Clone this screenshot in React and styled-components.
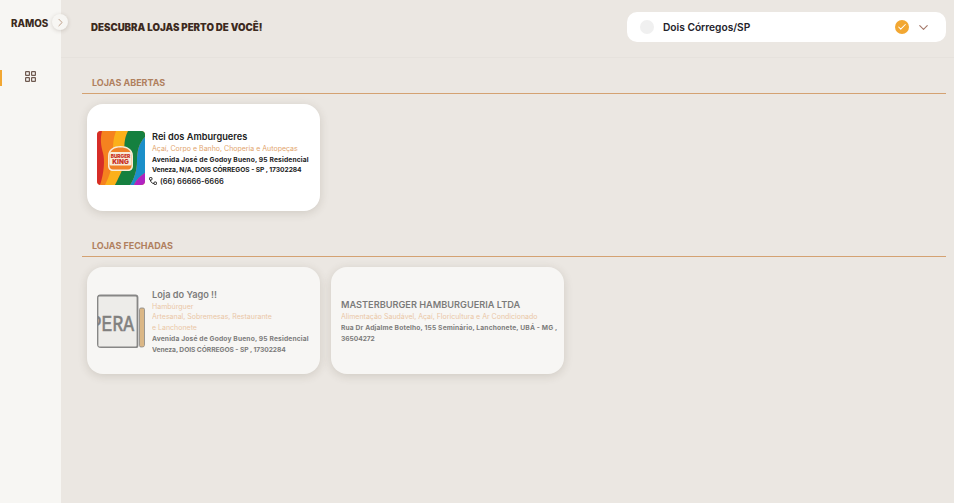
import React from "react";
import styled, { createGlobalStyle } from "styled-components";
import { ChevronDown, ChevronRight, Check } from "lucide-react";

const GlobalStyle = createGlobalStyle`
  html, body { margin: 0; padding: 0; height: 100%; }
  body { font-family: Inter, "Noto Sans", sans-serif; background: #ebe7e2; }
  #root { height: 100%; }
`;

const Page = styled.div`
  display: flex;
  width: 954px;
  height: 503px;
  overflow: hidden;
  background: #ebe7e2;
`;

const Sidebar = styled.aside`
  position: relative;
  width: 61px;
  flex-shrink: 0;
  background: #f7f6f3;
`;

const Brand = styled.div`
  padding: 17px 0 0 11px;
  height: 54px;
  box-sizing: border-box;
  font-size: 9.8px;
  line-height: 14px;
  font-weight: 800;
  color: #3c2a20;
`;

const Toggle = styled.button`
  position: absolute;
  top: 14px;
  left: 52px;
  width: 16px;
  height: 16px;
  padding: 0;
  border: 0;
  border-radius: 50%;
  background: #f7f6f3;
  box-shadow: 0 1px 4px rgba(60, 40, 20, 0.18);
  color: #b08a70;
  display: flex;
  align-items: center;
  justify-content: center;
`;

const NavItem = styled.div`
  height: 16px;
  margin-top: 16px;
  border-left: 2px solid #f2a732;
  display: flex;
  align-items: center;
  padding-left: 23px;
  color: #6f5a50;

  svg {
    margin-bottom: 4px;
  }
`;

const Main = styled.main`
  flex: 1;
  min-width: 0;
`;

const Header = styled.header`
  height: 58px;
  box-sizing: border-box;
  padding: 12px 8px 0 30px;
  display: flex;
  justify-content: space-between;
  align-items: flex-start;
  border-bottom: 1px solid #e6e2dd;
`;

const Title = styled.h1`
  margin: 9px 0 0;
  font-size: 9.7px;
  line-height: 14px;
  font-weight: 900;
  color: #3c2a20;
`;

const CitySelect = styled.div`
  width: 319px;
  height: 30px;
  box-sizing: border-box;
  padding: 0 15px 0 13px;
  display: flex;
  align-items: center;
  background: #fff;
  border-radius: 10px;
`;

const CityDot = styled.span`
  width: 14px;
  height: 14px;
  border-radius: 50%;
  background: #f0f0f0;
  margin-right: 9px;
`;

const CityName = styled.span`
  flex: 1;
  font-size: 10.2px;
  font-weight: 600;
  color: #23222a;
`;

const CheckBadge = styled.span`
  width: 14px;
  height: 14px;
  border-radius: 50%;
  background: #f2a732;
  color: #fff;
  display: flex;
  align-items: center;
  justify-content: center;
  margin-right: 7px;
`;

const Arrow = styled.span`
  display: flex;
  color: #a5796a;
`;

const Section = styled.section`
  padding: ${(p) => p.$top}px 8px 0 21px;
`;

const SectionTitle = styled.h2`
  margin: 0;
  padding: 0 0 4px 10px;
  font-size: 9px;
  line-height: 12px;
  font-weight: 700;
  color: #b0805e;
  border-bottom: 1px solid #d4a272;
`;

const CardRow = styled.div`
  display: flex;
  gap: 11px;
  padding: 10px 0 0 5px;
`;

const Card = styled.article`
  width: 233px;
  height: 107px;
  box-sizing: border-box;
  padding: 3px 10px 0;
  display: flex;
  align-items: center;
  gap: 7px;
  border-radius: 16px;
  background: ${(p) => (p.$closed ? "#f7f6f4" : "#fff")};
  box-shadow: 0 2px 10px rgba(70, 55, 40, 0.16);
`;

const Thumb = styled.div`
  width: 48px;
  height: 54px;
  margin-top: -3px;
  flex-shrink: 0;
  border-radius: 4px;
  overflow: hidden;
  opacity: ${(p) => (p.$closed ? 0.6 : 1)};

  svg {
    display: block;
  }
`;

const Info = styled.div`
  min-width: 0;
  flex: 1;
  opacity: ${(p) => (p.$closed ? 0.58 : 1)};
`;

const StoreName = styled.div`
  font-size: 9.2px;
  line-height: 12px;
  margin-bottom: 1px;
  font-weight: 600;
  color: #222;
`;

const Categories = styled.div`
  font-size: 7px;
  line-height: 10.7px;
  color: #e2a56d;
`;

const Address = styled.div`
  font-size: 6.7px;
  letter-spacing: ${(p) => (p.$caps ? "-0.01em" : "0.022em")};
  line-height: 10.7px;
  font-weight: 700;
  color: #222;
  white-space: nowrap;
`;

const PhoneLine = styled.div`
  position: relative;
  font-size: 7.5px;
  line-height: 11px;
  font-weight: 600;
  color: #222;
  padding-left: 8px;
`;

const PhoneIcon = styled.svg`
  position: absolute;
  left: -3px;
  top: 1px;
`;

const GridIcon = () => (
  <svg width="11" height="11" viewBox="0 0 11 11" fill="none" stroke="currentColor" strokeWidth="1.2">
    <rect x="0.600" y="0.600" width="3.800" height="3.800" rx="0.500" />
    <rect x="6.600" y="0.600" width="3.800" height="3.800" rx="0.500" />
    <rect x="0.600" y="6.600" width="3.800" height="3.800" rx="0.500" />
    <rect x="6.600" y="6.600" width="3.800" height="3.800" rx="0.500" />
  </svg>
);

const BurgerKingLogo = () => (
  <svg width="48" height="54" viewBox="0 0 48 54">
    <rect width="48" height="54" fill="#f5821f" />
    <path d="M0 0h5c-2 8-1 15 1 22s1 20-3 32H0z" fill="#d62d27" />
    <path d="M19 0h12c-4 8-4 15-3 24s-5 20-10 30H8c5-10 8-20 8-30S16 8 19 0z" fill="#fbb01a" />
    <path d="M31 0h17v6c-6 6-8 14-8 24s-3 18-7 24H18c5-10 11-21 10-30S27 8 31 0z" fill="#15803f" />
    <path d="M48 6v36c-5 3-9 7-11 12h-4c4-6 7-14 7-24S42 12 48 6z" fill="#1b8fc9" />
    <path d="M48 42v12H37c2-5 6-9 11-12z" fill="#b023c2" />
    <path d="M11 25c0-7 6-10 12.500-10S36 18 36 25v10c0 3-2 5-5 5H16c-3 0-5-2-5-5z" fill="#f8ecd8" />
    <path d="M12.500 25c0-6 5-8.500 11-8.500s11 2.500 11 8.500v10c0 2-1.500 3.500-3.500 3.500H16c-2 0-3.500-1.500-3.500-3.500z" fill="#f08227" />
    <rect x="12.500" y="21" width="22" height="13.500" rx="1.500" fill="#f8ecd8" />
    <text x="23.500" y="26.600" textAnchor="middle" fontFamily="Inter, sans-serif" fontWeight="900" fontSize="4.800" fill="#c8321f">BURGER</text>
    <text x="23.500" y="33.200" textAnchor="middle" fontFamily="Inter, sans-serif" fontWeight="900" fontSize="6.400" fill="#c8321f">KING</text>
  </svg>
);

const OperaMark = () => (
  <svg width="48" height="54" viewBox="0 0 48 54">
    <rect x="0.500" y="1.500" width="40" height="52" rx="2" fill="#e8e6e2" stroke="#3e3e3e" strokeWidth="1.800" />
    <rect x="42.500" y="14" width="5" height="39" rx="1.500" fill="#c98e3e" stroke="#3e3e3e" strokeWidth="0.800" />
    <svg x="1" y="2" width="39" height="51" viewBox="0 0 39 51">
      <text x="36" y="34" textAnchor="end" fontFamily="'Liberation Mono', monospace" fontSize="18" fill="#333" stroke="#333" strokeWidth="0.500" transform="translate(0 -7.500) scale(1 1.250)">PERA</text>
    </svg>
  </svg>
);

export default function App() {
  return (
    <Page>
      <GlobalStyle />
      <Sidebar>
        <Brand>RAMOS</Brand>
        <Toggle>
          <ChevronRight size={13} strokeWidth={1.5} />
        </Toggle>
        <NavItem>
          <GridIcon />
        </NavItem>
      </Sidebar>
      <Main>
        <Header>
          <Title>DESCUBRA LOJAS PERTO DE VOCÊ!</Title>
          <CitySelect>
            <CityDot />
            <CityName>Dois Córregos/SP</CityName>
            <CheckBadge>
              <Check size={10} strokeWidth={2.5} />
            </CheckBadge>
            <Arrow>
              <ChevronDown size={15} strokeWidth={1.8} />
            </Arrow>
          </CitySelect>
        </Header>

        <Section $top={19}>
          <SectionTitle>LOJAS ABERTAS</SectionTitle>
          <CardRow>
            <Card>
              <Thumb>
                <BurgerKingLogo />
              </Thumb>
              <Info>
                <StoreName>Rei dos Amburgueres</StoreName>
                <Categories>Açaí, Corpo e Banho, Choperia e Autopeças</Categories>
                <Address>Avenida José de Godoy Bueno, 95 Residencial</Address>
                <Address $caps>Veneza, N/A, DOIS CÓRREGOS - SP , 17302284</Address>
                <PhoneLine>
                  <PhoneIcon width="8" height="8" viewBox="0 0 8 8" fill="none" stroke="#222" strokeWidth="1">
                    <rect x="0.500" y="0.500" width="2.500" height="2.500" rx="0.800" />
                    <rect x="5" y="5" width="2.500" height="2.500" rx="0.800" />
                    <path d="M1.500 3c0 2 1.500 3.500 3.500 3.500" />
                  </PhoneIcon>
                  (66) 66666-6666
                </PhoneLine>
              </Info>
            </Card>
          </CardRow>
        </Section>

        <Section $top={29}>
          <SectionTitle>LOJAS FECHADAS</SectionTitle>
          <CardRow>
            <Card $closed>
              <Thumb $closed>
                <OperaMark />
              </Thumb>
              <Info $closed>
                <StoreName>Loja do Yago !!</StoreName>
                <Categories>Hambúrguer</Categories>
                <Categories>Artesanal, Sobremesas, Restaurante</Categories>
                <Categories>e Lanchonete</Categories>
                <Address>Avenida José de Godoy Bueno, 95 Residencial</Address>
                <Address $caps>Veneza, DOIS CÓRREGOS - SP , 17302284</Address>
              </Info>
            </Card>
            <Card $closed>
              <Info $closed>
                <StoreName>MASTERBURGER HAMBURGUERIA LTDA</StoreName>
                <Categories>Alimentação Saudável, Açaí, Floricultura e Ar Condicionado</Categories>
                <Address>Rua Dr Adjalme Botelho, 155 Seminário, Lanchonete, UBÁ - MG ,</Address>
                <Address $caps>36504272</Address>
              </Info>
            </Card>
          </CardRow>
        </Section>
      </Main>
    </Page>
  );
}
